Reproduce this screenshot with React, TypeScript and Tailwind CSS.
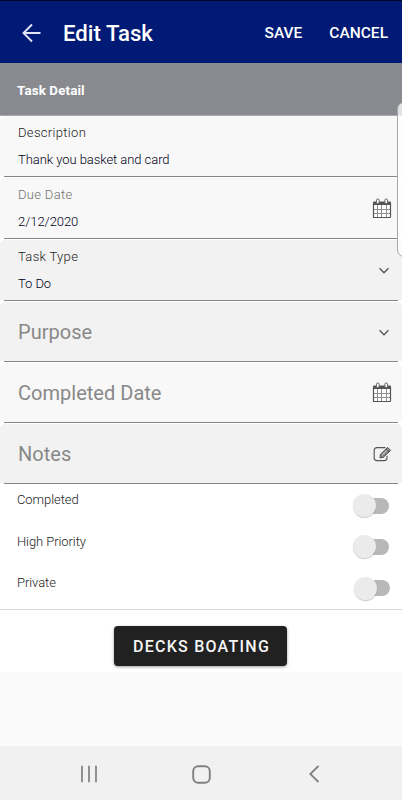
import React from 'react';

const CalendarIcon: React.FC = () => (
    <svg width="20" height="21" viewBox="0 0 20 21" fill="none">
        <path d="M1.5 7H18.5V19.5H1.5Z" fill="#fff" />
        <path d="M2 3.5H18Q19 3.5 19 4.5V7H1V4.5Q1 3.5 2 3.5Z" fill="#555" />
        <path d="M5.5 7V19M9.5 7V19M14.5 7V19M2 11.5H18M2 15.5H18" stroke="#909090" />
        <path d="M1.5 5V19.2Q1.5 19.5 2 19.5H18Q18.5 19.5 18.5 19V5" stroke="#555" strokeWidth="1.2" />
        <rect x="4.5" y="1" width="2.6" height="4.6" rx="1.2" fill="#fff" stroke="#555" strokeWidth=".9" />
        <rect x="12.9" y="1" width="2.6" height="4.6" rx="1.2" fill="#fff" stroke="#555" strokeWidth=".9" />
    </svg>
);

const ChevronIcon: React.FC = () => (
    <svg className="mt-[2px]" width="12" height="8" viewBox="0 0 12 8" fill="none">
        <path d="M1.5 1.3L6 5.8L10.5 1.3" stroke="#555" strokeWidth="1.3" />
    </svg>
);

const EditIcon: React.FC = () => (
    <svg width="19" height="16" viewBox="0 0 19 16" fill="none">
        <path d="M12.5 1.6H4Q1.2 1.6 1.2 4.4V12Q1.2 14.6 4 14.6H11.2Q14 14.6 14 12V9.8" stroke="#555" strokeWidth="1.1" />
        <path d="M14.6 1.4L17.6 4.4L10.2 11.4L7 11.8L7.4 8.4Z" fill="#888" stroke="#444" strokeWidth=".9" />
        <path d="M9.2 9L14.4 4" stroke="#eee" strokeWidth=".7" />
        <path d="M13 3L16 6" stroke="#444" strokeWidth=".8" />
    </svg>
);

interface FieldProps {
    label: string;
    value?: string;
    className: string;
    labelClassName?: string;
    children?: React.ReactNode;
}

const Field: React.FC<FieldProps> = ({ label, value, className, labelClassName = 'text-[#222]', children }) => (
    <div className={`flex w-full items-center rounded-t-[5px] pl-[18px] ${className}`}>
        <div className="flex-1">
            {value ? (
                <>
                    <div className={`text-[13px] leading-4 font-light tracking-[0.32px] ${labelClassName}`}>{label}</div>
                    <div className="mt-[11px] text-[13px] leading-4 font-light tracking-[-0.06px] text-[#000018]">{value}</div>
                </>
            ) : (
                <div className="text-xl leading-6 tracking-[0.02px] text-[#888]">{label}</div>
            )}
        </div>
        {children}
    </div>
);

const Line: React.FC = () => <div className="mx-1 mb-px h-px bg-[#85858c]" />;

interface ToggleRowProps {
    label: string;
    className?: string;
}

const ToggleRow: React.FC<ToggleRowProps> = ({ label, className = 'pr-[13px]' }) => (
    <div className={`flex h-[41.33px] items-start justify-between pl-[17px] ${className}`}>
        <div className="pt-[7.4px] text-[13px] leading-4 font-light tracking-[-0.08px] text-[#222]">{label}</div>
        <div className="mt-[7px] flex h-6 w-9 items-center pt-[3px]">
            <div className="z-10 h-[23px] w-[23px] shrink-0 rounded-full bg-[#ebebeb] shadow-[0_1px_1px_rgba(0,0,0,0.2)]" />
            <div className="-ml-3 h-4 w-[25px] rounded-r-full bg-[#b8b8b8]" />
        </div>
    </div>
);

export default function App() {
    return (
        <div className="relative flex h-[800px] w-[402px] flex-col overflow-hidden bg-[#fafafa] font-['Roboto',sans-serif]">
            <header className="flex h-[63px] shrink-0 items-center border-t border-[#000524] bg-[#001a75] pt-px pr-[14px] pl-[22px] text-white">
                <svg width="19" height="20" viewBox="0 0 19 20" fill="none" stroke="#e2e5fa" strokeWidth="1.9">
                    <path d="M18.5 10H2M10 1.5L1.5 10L10 18.5" />
                </svg>
                <h1 className="ml-[22px] flex-1 pt-[2px] text-[22.2px] font-medium">Edit Task</h1>
                <button className="pt-[2px] text-[15.5px] font-medium">SAVE</button>
                <button className="ml-[27px] pt-[2px] text-[15.5px] font-medium">CANCEL</button>
            </header>

            <div className="flex h-[53px] shrink-0 items-center border-b border-[#a9aaae] bg-[#898a8f] pt-[3px] pl-[17px] text-[13.3px] font-bold tracking-[0.15px] text-white">
                Task Detail
            </div>

            <div className="bg-white">
                <Field label="Description" value="Thank you basket and card" className="h-[60px] bg-[#f8f8f8]" />
                <Line />
                <Field label="Due Date" value="2/12/2020" className="h-[60px] bg-[#f8f8f8] pr-[10px]" labelClassName="text-[#707070]">
                    <CalendarIcon />
                </Field>
                <Line />
                <Field label="Task Type" value="To Do" className="h-[60px] bg-[#f2f2f2] pr-3">
                    <ChevronIcon />
                </Field>
                <Line />
                <Field label="Purpose" className="h-[59px] bg-[#f2f2f2] pr-3">
                    <ChevronIcon />
                </Field>
                <Line />
                <Field label="Completed Date" className="h-[59px] bg-[#f8f8f8] pr-[10px]">
                    <CalendarIcon />
                </Field>
                <Line />
                <Field label="Notes" className="h-[59px] bg-[#f2f2f2] pr-[10px]">
                    <EditIcon />
                </Field>
                <Line />
            </div>

            <div className="h-[124px] shrink-0 bg-white">
                <ToggleRow label="Completed" />
                <ToggleRow label="High Priority" />
                <ToggleRow label="Private" className="pr-3" />
            </div>

            <div className="flex h-[63px] shrink-0 items-start justify-center border-t border-[#d8d8d8] bg-white pt-4">
                <button className="ml-[-1px] h-10 w-[173px] rounded bg-[#212121] pt-px pl-[2px] text-base font-medium tracking-[1.25px] text-[#f5f5f5] shadow-[0_1px_3px_rgba(0,0,0,0.4)]">
                    DECKS BOATING
                </button>
            </div>

            <nav className="mt-auto flex h-[54px] shrink-0 items-center bg-[#f1f1f1] pt-[2px] pl-[80px]">
                <svg width="18" height="18" viewBox="0 0 18 18" stroke="#808080" strokeWidth="1.7">
                    <path d="M2 .7V17.3M9 .7V17.3M16 .7V17.3" />
                </svg>
                <svg className="ml-[94px]" width="19" height="19" viewBox="0 0 19 19" fill="none">
                    <rect x="1.2" y="1.2" width="16.6" height="16.6" rx="5" stroke="#808080" strokeWidth="1.9" />
                </svg>
                <svg className="ml-[98px]" width="11" height="18" viewBox="0 0 11 18" fill="none">
                    <path d="M9.5 1L1.3 9L9.5 17" stroke="#808080" strokeWidth="1.8" />
                </svg>
            </nav>

            {/* edge panel handle */}
            <div className="absolute top-[102px] left-[397px] h-[155px] w-4 rounded-l-[7px] border border-[#a8a8a8] bg-white/75" />
        </div>
    );
}
